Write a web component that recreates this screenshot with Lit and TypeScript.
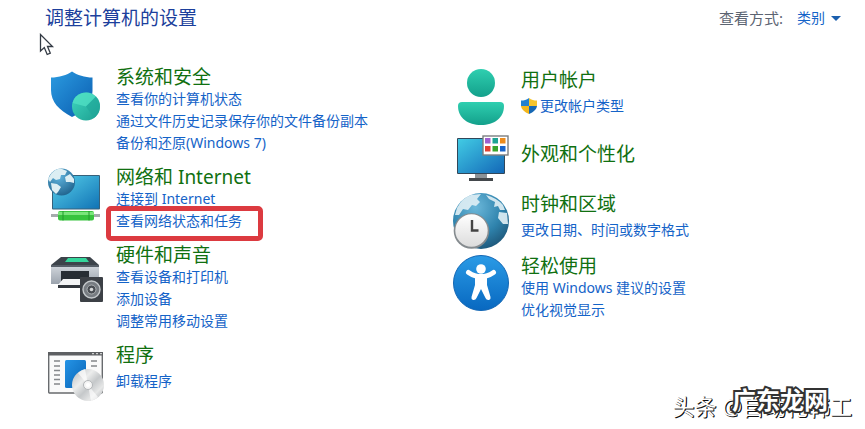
import { LitElement, html, css, svg, nothing, type TemplateResult } from "lit";
import { customElement, property } from "lit/decorators.js";
import { classMap } from "lit/directives/class-map.js";

interface Task {
  label: string;
  shield?: boolean;
  marked?: boolean;
}

interface Category {
  icon: string;
  title: string;
  tasks: Task[];
}

const LEFT: Category[] = [
  {
    icon: "security",
    title: "系统和安全",
    tasks: [
      { label: "查看你的计算机状态" },
      { label: "通过文件历史记录保存你的文件备份副本" },
      { label: "备份和还原(Windows 7)" },
    ],
  },
  {
    icon: "network",
    title: "网络和 Internet",
    tasks: [{ label: "连接到 Internet" }, { label: "查看网络状态和任务", marked: true }],
  },
  {
    icon: "hardware",
    title: "硬件和声音",
    tasks: [{ label: "查看设备和打印机" }, { label: "添加设备" }, { label: "调整常用移动设置" }],
  },
  { icon: "programs", title: "程序", tasks: [{ label: "卸载程序" }] },
];

const RIGHT: Category[] = [
  { icon: "users", title: "用户帐户", tasks: [{ label: "更改帐户类型", shield: true }] },
  { icon: "appearance", title: "外观和个性化", tasks: [] },
  { icon: "clock", title: "时钟和区域", tasks: [{ label: "更改日期、时间或数字格式" }] },
  {
    icon: "access",
    title: "轻松使用",
    tasks: [{ label: "使用 Windows 建议的设置" }, { label: "优化视觉显示" }],
  },
];

const ICONS: Record<string, TemplateResult> = {
  security: svg`
    <defs>
      <linearGradient id="a" x1="0" y1="0" x2="1" y2="1"><stop offset="0" stop-color="#2b9be0"/><stop offset="1" stop-color="#0a5cb0"/></linearGradient>
      <linearGradient id="b" x1="0" y1="0" x2="1" y2="1"><stop offset="0" stop-color="#3fd8c0"/><stop offset="1" stop-color="#1c9e90"/></linearGradient>
    </defs>
    <path d="M24 3.500C29 7 37 9.500 44.500 9.500V23C44.500 35 37 43 24 49C11 42 3 34 3 22V9.500C11 9.500 19 7 24 3.500Z" fill="url(#a)"/>
    <circle cx="38" cy="38.500" r="14" fill="url(#b)"/>
    <path d="M38 38.500L48 28.600A14 14 0 0 0 24.500 35Z" fill="#52e0c4" opacity=".75"/>
    <path d="M38 38.500L48 28.600A14 14 0 0 1 46 50Z" fill="#1fa79a" opacity=".6"/>`,
  network: svg`
    <defs>
      <linearGradient id="a" x1="0" y1="0" x2="1" y2="1"><stop offset="0" stop-color="#57d0ea"/><stop offset="1" stop-color="#1173b5"/></linearGradient>
      <radialGradient id="b" cx=".4" cy=".3" r=".75"><stop offset="0" stop-color="#5fb4de"/><stop offset="1" stop-color="#1f628c"/></radialGradient>
    </defs>
    <rect x="4" y="7" width="48" height="34.500" rx="1" fill="#37617a"/>
    <rect x="5" y="8" width="46" height="32.500" fill="url(#a)"/>
    <path d="M3 47.500H52" stroke="#a5abac" stroke-width="3"/>
    <rect x="10" y="43" width="36" height="9.500" rx="2" fill="#38c43e"/>
    <rect x="10" y="44" width="36" height="3" fill="#7be57b"/>
    <path d="M15 43V52.500M41 43V52.500" stroke="#229a2d"/>
    <circle cx="13.500" cy="14" r="13.500" fill="url(#b)"/>
    <path d="M3 6Q8 0 14 1L19 3L17 7L13 7L12 11L8 12L5 10L2 14L0 11ZM17 9L22 6L26 11L26 15L22 14L18 14ZM3 15L9 16L13 19L10 24L8 26L4 22Z" fill="#dceef3"/>`,
  hardware: svg`
    <defs><linearGradient id="a" x1="0" y1="0" x2="0" y2="1"><stop offset="0" stop-color="#d3d8de"/><stop offset="1" stop-color="#9ba3ad"/></linearGradient></defs>
    <path d="M13 11H42L51 19V22H3V19Z" fill="#3c434a"/>
    <path d="M20 12H38L41 16H17Z" fill="#35d69b"/>
    <path d="M3 19H51V38H3Z" fill="url(#a)"/>
    <path d="M3 19H51V21H3Z" fill="#565e67"/>
    <path d="M13 25H41V35H13Z" fill="#272d34"/>
    <path d="M15 33H40V39H10Z" fill="#f3f4f5"/>
    <path d="M10 39H40V42H10Z" fill="#30353b"/>
    <rect x="32" y="31" width="23" height="25" rx="1" fill="#3c4046"/>
    <circle cx="43.500" cy="43.500" r="8.500" fill="#777c82" stroke="#c4c8cb" stroke-width="1.400"/>
    <circle cx="43.500" cy="43.500" r="4.500" fill="#4a4e54" stroke="#aeb2b5"/>
    <circle cx="43.500" cy="43.500" r="1.800" fill="#d6d8d9"/>`,
  programs: svg`
    <defs>
      <linearGradient id="a" x1="0" y1="0" x2="1" y2="1"><stop offset="0" stop-color="#2594e6"/><stop offset="1" stop-color="#0763b5"/></linearGradient>
      <linearGradient id="b" x1="0" y1="0" x2="1" y2="1"><stop offset="0" stop-color="#b5b8ba"/><stop offset=".35" stop-color="#eceded"/><stop offset=".55" stop-color="#c5c8ca"/><stop offset=".75" stop-color="#e6e7e7"/><stop offset="1" stop-color="#a9adb0"/></linearGradient>
    </defs>
    <rect x=".7" y="7" width="53.600" height="40" rx="1" fill="#fafafa" stroke="#686b6e" stroke-width="1.400"/>
    <path d="M0 6H55V9.500H0Z" fill="#5d5f62"/>
    <path d="M44 7.700H46M48 7.700H50M52 7.700H54" stroke="#e8e8e8"/>
    <path d="M6 15H12M6 20H12M6 24.500H12M6 29H12M6 33.500H12M6 38H12M43 15H49M43 20H49" stroke="#85888b" stroke-width="1.400"/>
    <rect x="17" y="14" width="21" height="28" rx="1.500" fill="url(#a)"/>
    <circle cx="40" cy="39" r="16" fill="url(#b)"/>
    <path d="M40 39L30 27A16 16 0 0 1 37 23ZM40 39L50 51A16 16 0 0 1 43 55Z" fill="#fff" opacity=".65"/>
    <circle cx="40" cy="39" r="4.500" fill="#f5f5f5" stroke="#b3b6b8"/>
    <circle cx="40" cy="39" r="2" fill="#fff"/>`,
  users: svg`
    <defs><linearGradient id="a" x1="0" y1="0" x2="0" y2="1"><stop offset="0" stop-color="#2fcfb0"/><stop offset="1" stop-color="#13a08b"/></linearGradient></defs>
    <circle cx="28" cy="14" r="14" fill="url(#a)"/>
    <path d="M9 33H47Q51 33 51 37C51 49 41 56 28 56S5 49 5 37Q5 33 9 33Z" fill="url(#a)"/>`,
  appearance: svg`
    <defs><linearGradient id="a" x1="0" y1="0" x2="1" y2="1"><stop offset="0" stop-color="#41cbe4"/><stop offset="1" stop-color="#1368b8"/></linearGradient></defs>
    <path d="M22 42H34V48H22Z" fill="#8b9297"/>
    <rect x="16" y="47" width="24" height="3" fill="#43484c"/>
    <rect x="4" y="7" width="48" height="36" rx="1" fill="#31475a"/>
    <rect x="5" y="8" width="46" height="34" fill="url(#a)"/>
    <rect x="30" y="5" width="25" height="19" fill="#fff" stroke="#7b7e80" stroke-width="1.400"/>
    <path d="M32 7H37.500V12.500H32Z" fill="#9f5fd0"/><path d="M39.500 7H45V12.500H39.500Z" fill="#1da393"/><path d="M47 7H52.500V12.500H47Z" fill="#ed8b1c"/>
    <path d="M32 15H37.500V20.500H32Z" fill="#e24233"/><path d="M39.500 15H45V20.500H39.500Z" fill="#38a52b"/><path d="M47 15H52.500V20.500H47Z" fill="#1764cc"/>`,
  clock: svg`
    <defs>
      <radialGradient id="a" cx=".4" cy=".25" r=".8"><stop offset="0" stop-color="#6cb8da"/><stop offset=".6" stop-color="#2f83ad"/><stop offset="1" stop-color="#1d5577"/></radialGradient>
      <linearGradient id="b" x1="0" y1="0" x2="0" y2="1"><stop offset="0" stop-color="#fff"/><stop offset="1" stop-color="#dcdcdc"/></linearGradient>
    </defs>
    <circle cx="28" cy="28" r="28" fill="url(#a)"/>
    <path d="M4 15Q9 5 18 2L28 1L24 6L27 9L23 13L19 12L15 17L10 16L6 22L2 22ZM33 2Q44 5 50 12L52 17L47 17L45 13L41 14L42 9L36 6ZM46 19L54 20L55 31L50 31L45 25Z" fill="#e1f0f5" opacity=".9"/>
    <circle cx="18.500" cy="38" r="17.800" fill="#858b8f"/>
    <circle cx="18.500" cy="37.500" r="16.200" fill="url(#b)"/>
    <path d="M19 27V37.500H25.500" fill="none" stroke="#444" stroke-width="2.400"/>`,
  access: svg`
    <defs><linearGradient id="a" x1="0" y1="0" x2="0" y2="1"><stop offset="0" stop-color="#2a9be6"/><stop offset="1" stop-color="#0868c0"/></linearGradient></defs>
    <circle cx="28" cy="28" r="27.500" fill="url(#a)" stroke="#1467b4"/>
    <circle cx="28" cy="14" r="4.800" fill="#fff"/>
    <path d="M15.500 17.500Q28 26 40.500 17.500" fill="none" stroke="#fff" stroke-width="5" stroke-linecap="round"/>
    <path d="M22 19H34V30L37.500 42Q38 44.500 36 45Q33.500 45.500 32.500 43L28 34L23.500 43Q22.500 45.500 20 45Q18 44.500 18.500 42L22 30Z" fill="#fff"/>`,
};

const uacShield = svg`
  <path d="M9 1C11.500 3 14 3.500 17 3.500V9H9Z" fill="#f6c52c"/>
  <path d="M9 1C6.500 3 4 3.500 1 3.500V9H9Z" fill="#2180d0"/>
  <path d="M1 9H9V17C4.500 15 1.500 12.500 1 9Z" fill="#f3b71e"/>
  <path d="M17 9H9V17C13.500 15 16.500 12.500 17 9Z" fill="#1668b4"/>`;

@customElement("cp-category")
export class CpCategory extends LitElement {
  @property({ attribute: false }) category!: Category;

  static styles = css`
    :host { display: block; }
    .item { display: flex; align-items: flex-start; gap: 12px; }
    .icon { flex: none; width: 56px; height: 56px; margin-top: var(--icon-top, 0px); overflow: visible; }
    .title { margin: 0; font-size: 19px; line-height: 22px; font-weight: 400; }
    .title a { color: #107010; }
    a { color: #1463c8; text-decoration: none; white-space: nowrap; }
    a:hover { text-decoration: underline; }
    .tasks { list-style: none; margin: 0; padding: 0; font-size: 14px; line-height: 22px; }
    .single .tasks { margin-top: 4px; }
    .bare .body { padding-top: 12px; }
    .task { display: flex; align-items: center; gap: 2px; position: relative; width: fit-content; }
    .shield { width: 18px; height: 18px; margin-left: -1px; }
    .marked::after {
      content: ""; position: absolute; inset: -4px -21px -9px -10px;
      border: 5px solid #dc3a40; border-radius: 5px; box-sizing: border-box; pointer-events: none;
    }
  `;

  render() {
    const { icon, title, tasks } = this.category;
    return html`
      <section class=${classMap({ item: true, single: tasks.length === 1, bare: !tasks.length })}>
        <svg class="icon" viewBox="0 0 56 56" aria-hidden="true">${ICONS[icon]}</svg>
        <div class="body">
          <h2 class="title"><a href="#${icon}">${title}</a></h2>
          ${tasks.length
            ? html`<ul class="tasks">
                ${tasks.map(
                  (t) => html`<li class=${classMap({ task: true, marked: !!t.marked })}>
                    ${t.shield
                      ? html`<svg class="shield" viewBox="0 0 18 18" aria-hidden="true">${uacShield}</svg>`
                      : nothing}
                    <a href="#${icon}">${t.label}</a>
                  </li>`
                )}
              </ul>`
            : nothing}
        </div>
      </section>
    `;
  }
}

@customElement("app-root")
export class AppRoot extends LitElement {
  static styles = css`
    :host {
      display: block; position: relative; min-height: 100vh; box-sizing: border-box;
      overflow: hidden; background: #fff;
      font-family: "Noto Sans", "Noto Sans CJK SC", sans-serif;
    }
    .top { display: flex; justify-content: space-between; align-items: center; padding: 6px 24px 0 45px; }
    .heading { margin: 0; font-size: 19px; line-height: 24px; font-weight: 400; color: #1c3f9c; }
    .view { display: flex; align-items: center; font-size: 15px; line-height: 22px; color: #5c6472; }
    .mode {
      appearance: none; border: 0; background: none; padding: 0; margin: 0 6px 0 14px;
      font: inherit; font-size: 14px; color: #1463c8;
    }
    .arrow { width: 10px; height: 5px; }
    .columns { display: grid; grid-template-columns: 1fr 1fr; padding: 36px 7px 20px 48px; }
    .left, .right { display: flex; flex-direction: column; }
    .left { gap: 12px; --icon-top: 2px; }
    .right { gap: 6px; padding-top: 3px; }
    .cursor { position: absolute; left: 39px; top: 33px; width: 16px; height: 23px; }
    .credit {
      position: absolute; right: 13px; bottom: 8px; font-size: 22px; line-height: 30px;
      color: #fff; text-shadow: 1px 1px 0 #111, 1px 0 0 #222; white-space: nowrap;
    }
    .brand {
      position: absolute; right: 37px; bottom: 14px; font-size: 24px; line-height: 30px; font-weight: 700;
      color: #fff; -webkit-text-stroke: 4px #333; paint-order: stroke fill; white-space: nowrap;
    }
  `;

  render() {
    return html`
      <header class="top">
        <h1 class="heading">调整计算机的设置</h1>
        <div class="view">
          <label for="mode">查看方式:</label>
          <select id="mode" class="mode"><option>类别</option></select>
          <svg class="arrow" viewBox="0 0 10 5" aria-hidden="true"><path d="M0 0H10L5 5Z" fill="#1b5fae"/></svg>
        </div>
      </header>
      <main class="columns">
        <div class="left">${LEFT.map((c) => html`<cp-category .category=${c}></cp-category>`)}</div>
        <div class="right">${RIGHT.map((c) => html`<cp-category .category=${c}></cp-category>`)}</div>
      </main>
      <svg class="cursor" viewBox="0 0 16 23" aria-hidden="true">
        <path d="M1.500 1.500V18L5.300 14.600L8.200 21.500L11.300 20.200L8.500 13.500H13.500Z" fill="#fff" stroke="#333a44" stroke-width="1.300"/>
      </svg>
      <div class="credit">头条 @自动化韩工</div>
      <div class="brand">广东龙网</div>
    `;
  }
}
